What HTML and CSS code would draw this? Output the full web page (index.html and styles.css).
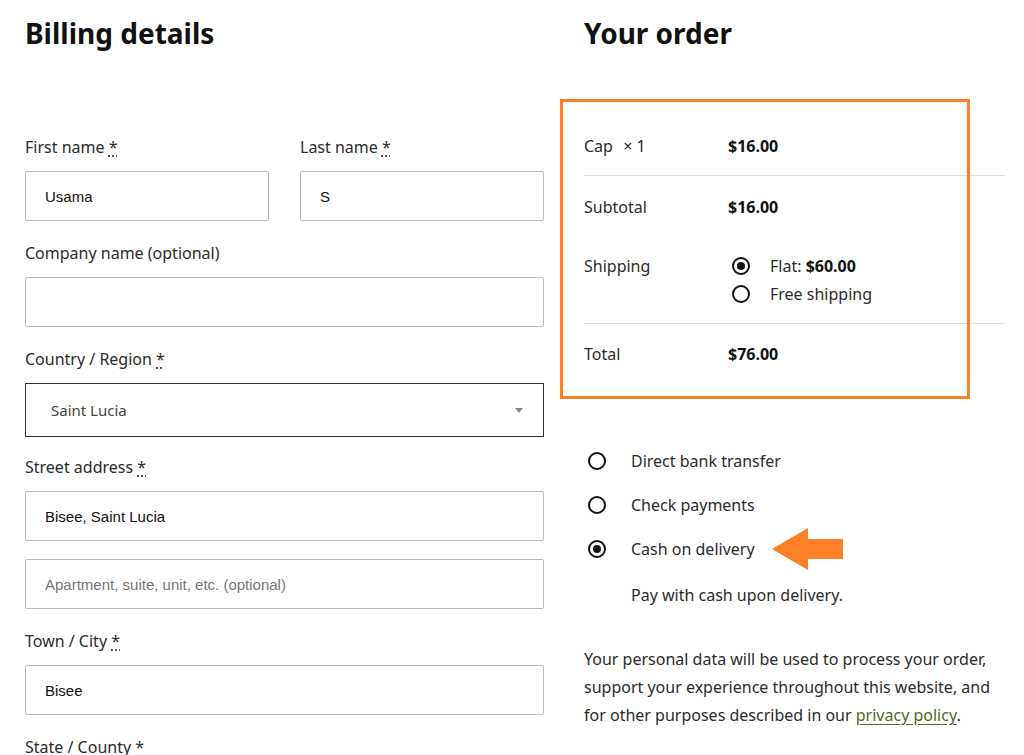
FILE: index.html
```html
<!DOCTYPE html>
<html lang="en">
  <head>
    <meta charset="UTF-8" />
    <meta name="viewport" content="width=device-width, initial-scale=1.0" />
    <title>Checkout</title>
    <link rel="stylesheet" href="styles.css">
  </head>
  <body>
    <div class="checkout">
      <div class="billing">
        <h2>Billing details</h2>

        <div class="name-row">
          <div class="field">
            <label for="first">First name <abbr title="required">*</abbr></label>
            <input type="text" id="first" value="Usama" />
          </div>
          <div class="field">
            <label for="last">Last name <abbr title="required">*</abbr></label>
            <input type="text" id="last" value="S" />
          </div>
        </div>

        <div class="field">
          <label for="company">Company name (optional)</label>
          <input type="text" id="company" />
        </div>

        <div class="field tight">
          <label>Country / Region <abbr title="required">*</abbr></label>
          <div class="select">
            <span>Saint Lucia</span>
            <span class="caret"></span>
          </div>
        </div>

        <div class="field tight">
          <label for="street">Street address <abbr title="required">*</abbr></label>
          <input type="text" id="street" value="Bisee, Saint Lucia" />
        </div>
        <div class="field">
          <input type="text" placeholder="Apartment, suite, unit, etc. (optional)" />
        </div>

        <div class="field">
          <label for="city">Town / City <abbr title="required">*</abbr></label>
          <input type="text" id="city" value="Bisee" />
        </div>

        <div class="field">
          <label>State / County <span class="star">*</span></label>
        </div>
      </div>

      <div class="order">
        <h2>Your order</h2>

        <div class="order-table">
          <div class="row item">
            <div class="cell-label">Cap&nbsp;&nbsp;<span class="qty">× 1</span></div>
            <div class="cell-value"><b>$16.00</b></div>
          </div>
          <div class="row subtotal">
            <div class="cell-label">Subtotal</div>
            <div class="cell-value"><b>$16.00</b></div>
          </div>
          <div class="row shipping">
            <div class="cell-label">Shipping</div>
            <div class="cell-value">
              <div class="ship-option"><span class="radio checked"></span><span>Flat: <b>$60.00</b></span></div>
              <div class="ship-option"><span class="radio"></span><span>Free shipping</span></div>
            </div>
          </div>
          <div class="row total">
            <div class="cell-label">Total</div>
            <div class="cell-value"><b>$76.00</b></div>
          </div>
          <div class="highlight"></div>
        </div>

        <ul class="payments">
          <li><span class="radio"></span>Direct bank transfer</li>
          <li><span class="radio"></span>Check payments</li>
          <li class="cod">
            <span class="radio checked"></span>Cash on delivery
            <svg class="arrow" width="72" height="42" viewBox="0 0 72 42">
              <polygon points="0,21 36,0 36,11 71,11 71,31 36,31 36,42" fill="#fd7f28" />
            </svg>
          </li>
        </ul>
        <p class="pay-note">Pay with cash upon delivery.</p>

        <p class="privacy">
          Your personal data will be used to process your order, support your
          experience throughout this website, and for other purposes described
          in our <a href="#">privacy policy</a>.
        </p>
      </div>
    </div>
  </body>
</html>
```

FILE: styles.css
```css
body {
  margin: 0;
  background-color: #fff;
  color: #2b2b2b;
  font-family: "Noto Sans", "Open Sans", sans-serif;
  font-size: 16px;
  line-height: 24px;
  overflow: hidden;
}

.checkout {
  display: grid;
  grid-template-columns: 519px 421px;
  column-gap: 40px;
  padding: 16px 0 0 25px;
}

h2 {
  margin: 0;
  font-size: 28px;
  line-height: 34px;
  font-weight: 700;
  color: #111;
}

.billing h2 {
  margin-bottom: 85px;
}

.name-row {
  display: grid;
  grid-template-columns: 1fr 1fr;
  column-gap: 31px;
}

.field {
  display: flex;
  flex-direction: column;
  margin-bottom: 20px;
}

.field.tight {
  margin-bottom: 18px;
}

label {
  display: block;
  margin-bottom: 12px;
}

abbr {
  text-decoration: underline dotted;
  text-underline-offset: 3px;
  border: 0;
}

input {
  height: 50px;
  box-sizing: border-box;
  border: 1px solid #bbb;
  border-radius: 2px;
  padding: 0 19px;
  font-family: "Liberation Sans", Arial, sans-serif;
  font-size: 15px;
  color: #111;
  background: #fff;
}

input::placeholder {
  color: #767676;
}

.select {
  height: 54px;
  box-sizing: border-box;
  border: 1px solid #333;
  padding: 0 20px 0 25px;
  display: flex;
  align-items: center;
  justify-content: space-between;
  color: #444;
  font-size: 15px;
}

.caret {
  width: 0;
  height: 0;
  border-left: 4px solid transparent;
  border-right: 4px solid transparent;
  border-top: 5px solid #888;
}

/* order column */

.order h2 {
  margin-bottom: 84px;
}

.order-table {
  position: relative;
}

.row {
  display: grid;
  grid-template-columns: 144px 1fr;
}

.row.item {
  padding: 0 0 17px;
  border-bottom: 1px solid #ddd;
}

.row.subtotal {
  padding: 19px 0 16px;
}

.row.shipping {
  padding: 17px 0 15px;
  border-bottom: 1px solid #ddd;
}

.row.shipping .cell-label {
  padding-top: 2px;
}

.row.total {
  padding: 18px 0 0;
}

b {
  font-weight: 700;
  color: #111;
}

.qty {
  margin-left: 2px;
}

.ship-option {
  display: flex;
  align-items: center;
  height: 28px;
}

.ship-option .radio {
  margin: 0 20px 0 4px;
}

.radio {
  display: inline-block;
  box-sizing: border-box;
  width: 18px;
  height: 18px;
  border: 2px solid #111;
  border-radius: 50%;
  position: relative;
  flex-shrink: 0;
}

.radio.checked::after {
  content: "";
  position: absolute;
  left: 3px;
  top: 3px;
  width: 8px;
  height: 8px;
  border-radius: 50%;
  background: #111;
}

.highlight {
  position: absolute;
  left: -24px;
  top: -35px;
  width: 410px;
  height: 300px;
  box-sizing: border-box;
  border: 3px solid #fd7f28;
  pointer-events: none;
}

.payments {
  list-style: none;
  margin: 73px 0 0;
  padding: 0;
}

.payments li {
  display: flex;
  align-items: center;
  height: 44px;
  position: relative;
}

.payments .radio {
  margin: 0 25px 0 4px;
}

.arrow {
  position: absolute;
  left: 188px;
  top: 1px;
}

.pay-note {
  margin: 12px 0 0 47px;
}

.privacy {
  margin: 38px 0 0;
  line-height: 28px;
}

.privacy a {
  color: #4b6b20;
  text-underline-offset: 3px;
}
```
